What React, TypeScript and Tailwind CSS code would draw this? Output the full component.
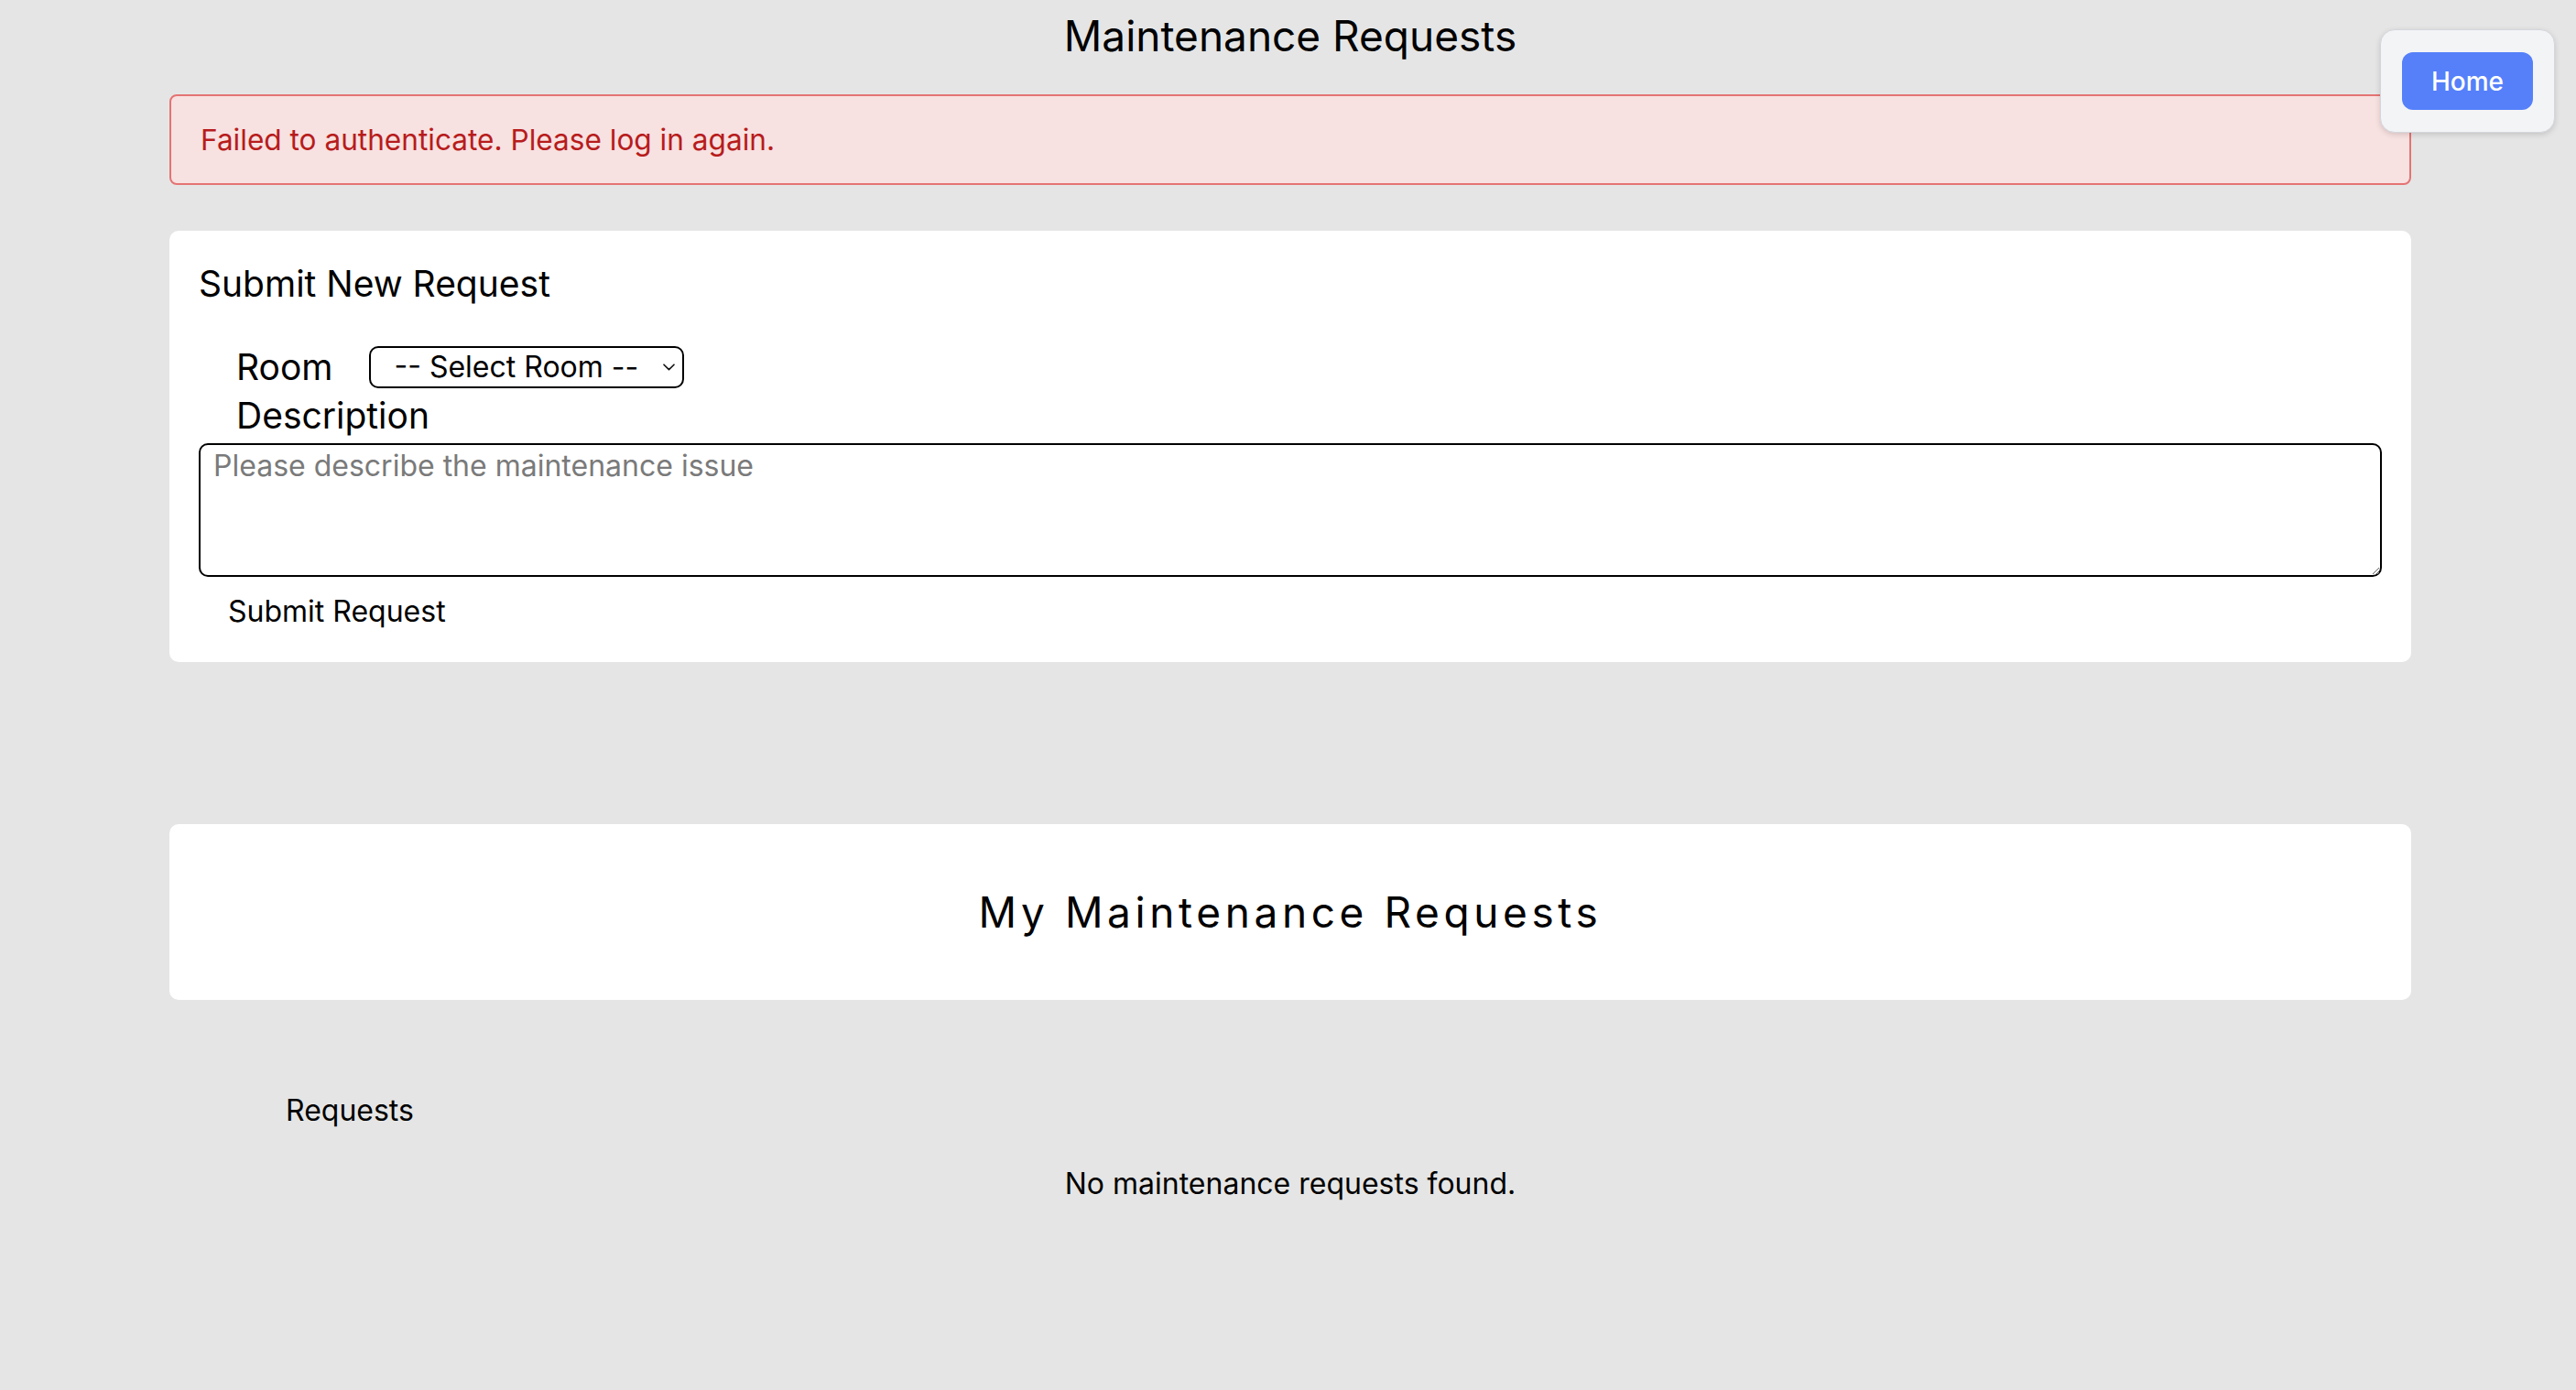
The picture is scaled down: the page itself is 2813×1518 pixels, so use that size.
export default function App() {
  return (
    <div className="min-h-[1518px] bg-[#e5e5e5] font-['Inter',sans-serif] text-black">
      <div className="fixed top-[32px] right-[23px] rounded-[16px] border border-[#d4d6dc] bg-[#f3f4f6] px-[23px] pt-[24px] pb-[24px] shadow-[0_2px_6px_rgba(0,0,0,0.15)]">
        <button className="h-[63px] w-[143px] rounded-[12px] bg-[#5580fa] text-[28px] font-medium text-white">
          Home
        </button>
      </div>
      <div className="ml-[185px] w-[2448px] pt-[10px]">
        <h1 className="text-center text-[46px] leading-[58px] font-normal">Maintenance Requests</h1>
        <div className="mt-[35px] rounded-[8px] border-2 border-[#e57373] bg-[#f8e1e1] py-[30px] pr-[30px] pl-[32px] text-[31.6px] leading-[35px] text-[#b71c1c]">
          Failed to authenticate. Please log in again.
        </div>
        <div className="mt-[50px] rounded-[10px] bg-white px-[32px] pt-[36px] pb-[38px]">
          <h2 className="text-[39px] leading-[44px]">Submit New Request</h2>
          <div className="mt-[46px] flex items-center pl-[41px]">
            <label className="text-[39px] leading-[44px]">Room</label>
            <div className="relative ml-[40px]">
              <select className="block h-[46px] w-[344px] appearance-none rounded-[10px] border-2 border-black bg-white pl-[25px] text-[32px] leading-[38px]">
                <option>-- Select Room --</option>
              </select>
              <svg
                className="pointer-events-none absolute top-1/2 right-[10px] -translate-y-1/2"
                width="13"
                height="8"
                viewBox="0 0 13 8"
                fill="none"
              >
                <path d="M1 1.2 L6.5 6.6 L12 1.2" stroke="#111" strokeWidth="1.6" strokeLinecap="round" strokeLinejoin="round" />
              </svg>
            </div>
          </div>
          <label className="mt-[8px] block pl-[41px] text-[39px] leading-[44px]">Description</label>
          <textarea
            className="mt-[8px] block h-[146px] w-full resize rounded-[10px] border-2 border-black px-[14px] pt-[4px] text-[32px] leading-[38px] placeholder:text-[#7a7a7a]"
            placeholder="Please describe the maintenance issue"
          />
          <button className="mt-[20px] block pl-[32px] text-[32px] leading-[35px]">Submit Request</button>
        </div>
        <div className="mt-[177px] flex h-[192px] items-center justify-center rounded-[10px] bg-white">
          <h2 className="text-[46px] leading-[58px] tracking-[0.1em]">My Maintenance Requests</h2>
        </div>
        <div className="mt-[103px] pl-[127px] text-[32px] leading-[35px]">Requests</div>
        <p className="mt-[45px] text-center text-[32px] leading-[35px]">No maintenance requests found.</p>
      </div>
    </div>
  );
}
